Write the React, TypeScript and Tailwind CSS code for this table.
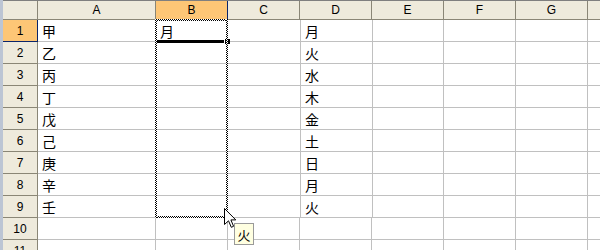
import React from 'react';

// シート: 行ヘッダ + A〜H列、B1:B9 をコピー範囲として点線で囲む

const COLS = ['A', 'B', 'C', 'D', 'E', 'F', 'G', 'H'];
const COL_W = ['w-[118px]', 'w-[72px]', 'w-[72px]', 'w-[72px]', 'w-[72px]', 'w-[72px]', 'w-[72px]', 'w-[72px]'];
const STEMS = ['甲', '乙', '丙', '丁', '戊', '己', '庚', '辛', '壬'];
const DAYS = ['月', '火', '水', '木', '金', '土', '日', '月', '火'];
const ROWS = 11;

const cellFont = { fontFamily: '"Noto Sans CJK JP", "Liberation Sans", sans-serif' };
const headFont = { fontFamily: '"Liberation Sans", Arial, sans-serif' };

function cellValue(col: number, row: number) {
  if (col === 0) return STEMS[row - 1] ?? '';
  if (col === 1 && row === 1) return '月';
  if (col === 3) return DAYS[row - 1] ?? '';
  return '';
}

function ColumnHeader() {
  return (
    <div className="flex h-[19px] shrink-0" style={headFont}>
      <div className="w-[35px] shrink-0 bg-[#eeeadc] border-r border-b border-[#8a8676]" />
      {COLS.map((c, i) => (
        <div
          key={c}
          className={
            i === 1
              ? `${COL_W[i]} shrink-0 bg-[#fdc676] border-r border-b border-r-[#0a246a] border-b-[#8a8676] flex items-center justify-center text-[12px] text-black`
              : `${COL_W[i]} shrink-0 bg-[#eeeadc] border-r border-b border-[#8a8676] flex items-center justify-center text-[12px] text-black`
          }
        >
          {c}
        </div>
      ))}
    </div>
  );
}

function Row({ row }: { row: number }) {
  const inDayBlock = row <= 9;
  return (
    <div className="flex h-[22px] shrink-0">
      <div
        className={
          row === 1
            ? 'w-[35px] shrink-0 bg-[#fdc676] border-r border-b border-[#0a246a] flex items-center justify-center text-[12px] text-black'
            : 'w-[35px] shrink-0 bg-[#eeeadc] border-r border-b border-[#8a8676] flex items-center justify-center text-[12px] text-black'
        }
        style={headFont}
      >
        {row}
      </div>
      {COLS.map((c, i) => {
        let border = 'border-r border-b border-[#c0c0c0]';
        if (inDayBlock && i === 2) border = 'border-b border-[#c0c0c0]';
        if (inDayBlock && i === 3) border = 'border-l border-b border-[#c0c0c0]';
        if (inDayBlock && i === 4) border = 'border-l border-r border-b border-[#c0c0c0]';
        return (
          <div
            key={c}
            className={`${COL_W[i]} shrink-0 ${border} bg-white flex items-center pl-[4px] text-[14px] leading-none text-black`}
            style={cellFont}
          >
            {cellValue(i, row)}
          </div>
        );
      })}
    </div>
  );
}

const checker =
  'absolute bg-[image:repeating-conic-gradient(#000_0_25%,#fff_0_50%)] bg-[length:2px_2px]';

export default function App() {
  return (
    <div className="relative w-[600px] h-[250px] overflow-hidden bg-white flex">
      <div className="w-[3px] shrink-0 bg-[#bcc5d4]" />
      <div className="flex-1 flex flex-col border-t border-[#7f7f7f] overflow-hidden">
        <ColumnHeader />
        {Array.from({ length: ROWS }, (_, i) => (
          <Row key={i} row={i + 1} />
        ))}
      </div>

      {/* アクティブセル B1 の下枠とフィルハンドル */}
      <div className="absolute left-[156px] top-[40px] w-[68px] h-[3px] bg-black" />
      <div className="absolute left-[224px] top-[39px] w-[6px] h-[5px] bg-black border-l border-white" />

      {/* コピー範囲 B1:B9 の点線枠 */}
      <div className={`${checker} left-[155px] top-[19px] w-[73px] h-[2px]`} />
      <div className={`${checker} left-[155px] top-[216px] w-[73px] h-[2px]`} />
      <div className={`${checker} left-[155px] top-[19px] w-[2px] h-[199px]`} />
      <div className={`${checker} left-[226px] top-[19px] w-[2px] h-[199px]`} />

      {/* マウスカーソル */}
      <svg className="absolute left-[224px] top-[208px]" width="13" height="21" viewBox="0 0 13 21">
        <path
          d="M0.5 0.5 L0.5 16.5 L4.5 12.8 L7.3 19.3 L9.6 18.3 L6.9 11.9 L11.8 11.9 Z"
          fill="#fff"
          stroke="#000"
          strokeWidth="1"
          strokeLinejoin="miter"
        />
      </svg>

      {/* ドラッグ中の値ヒント */}
      <div
        className="absolute left-[234px] top-[223px] w-[20px] h-[22px] bg-[#ffffe1] border border-[#9a9a9a] flex items-center justify-center text-[13px] leading-none text-black"
        style={cellFont}
      >
        火
      </div>
    </div>
  );
}
